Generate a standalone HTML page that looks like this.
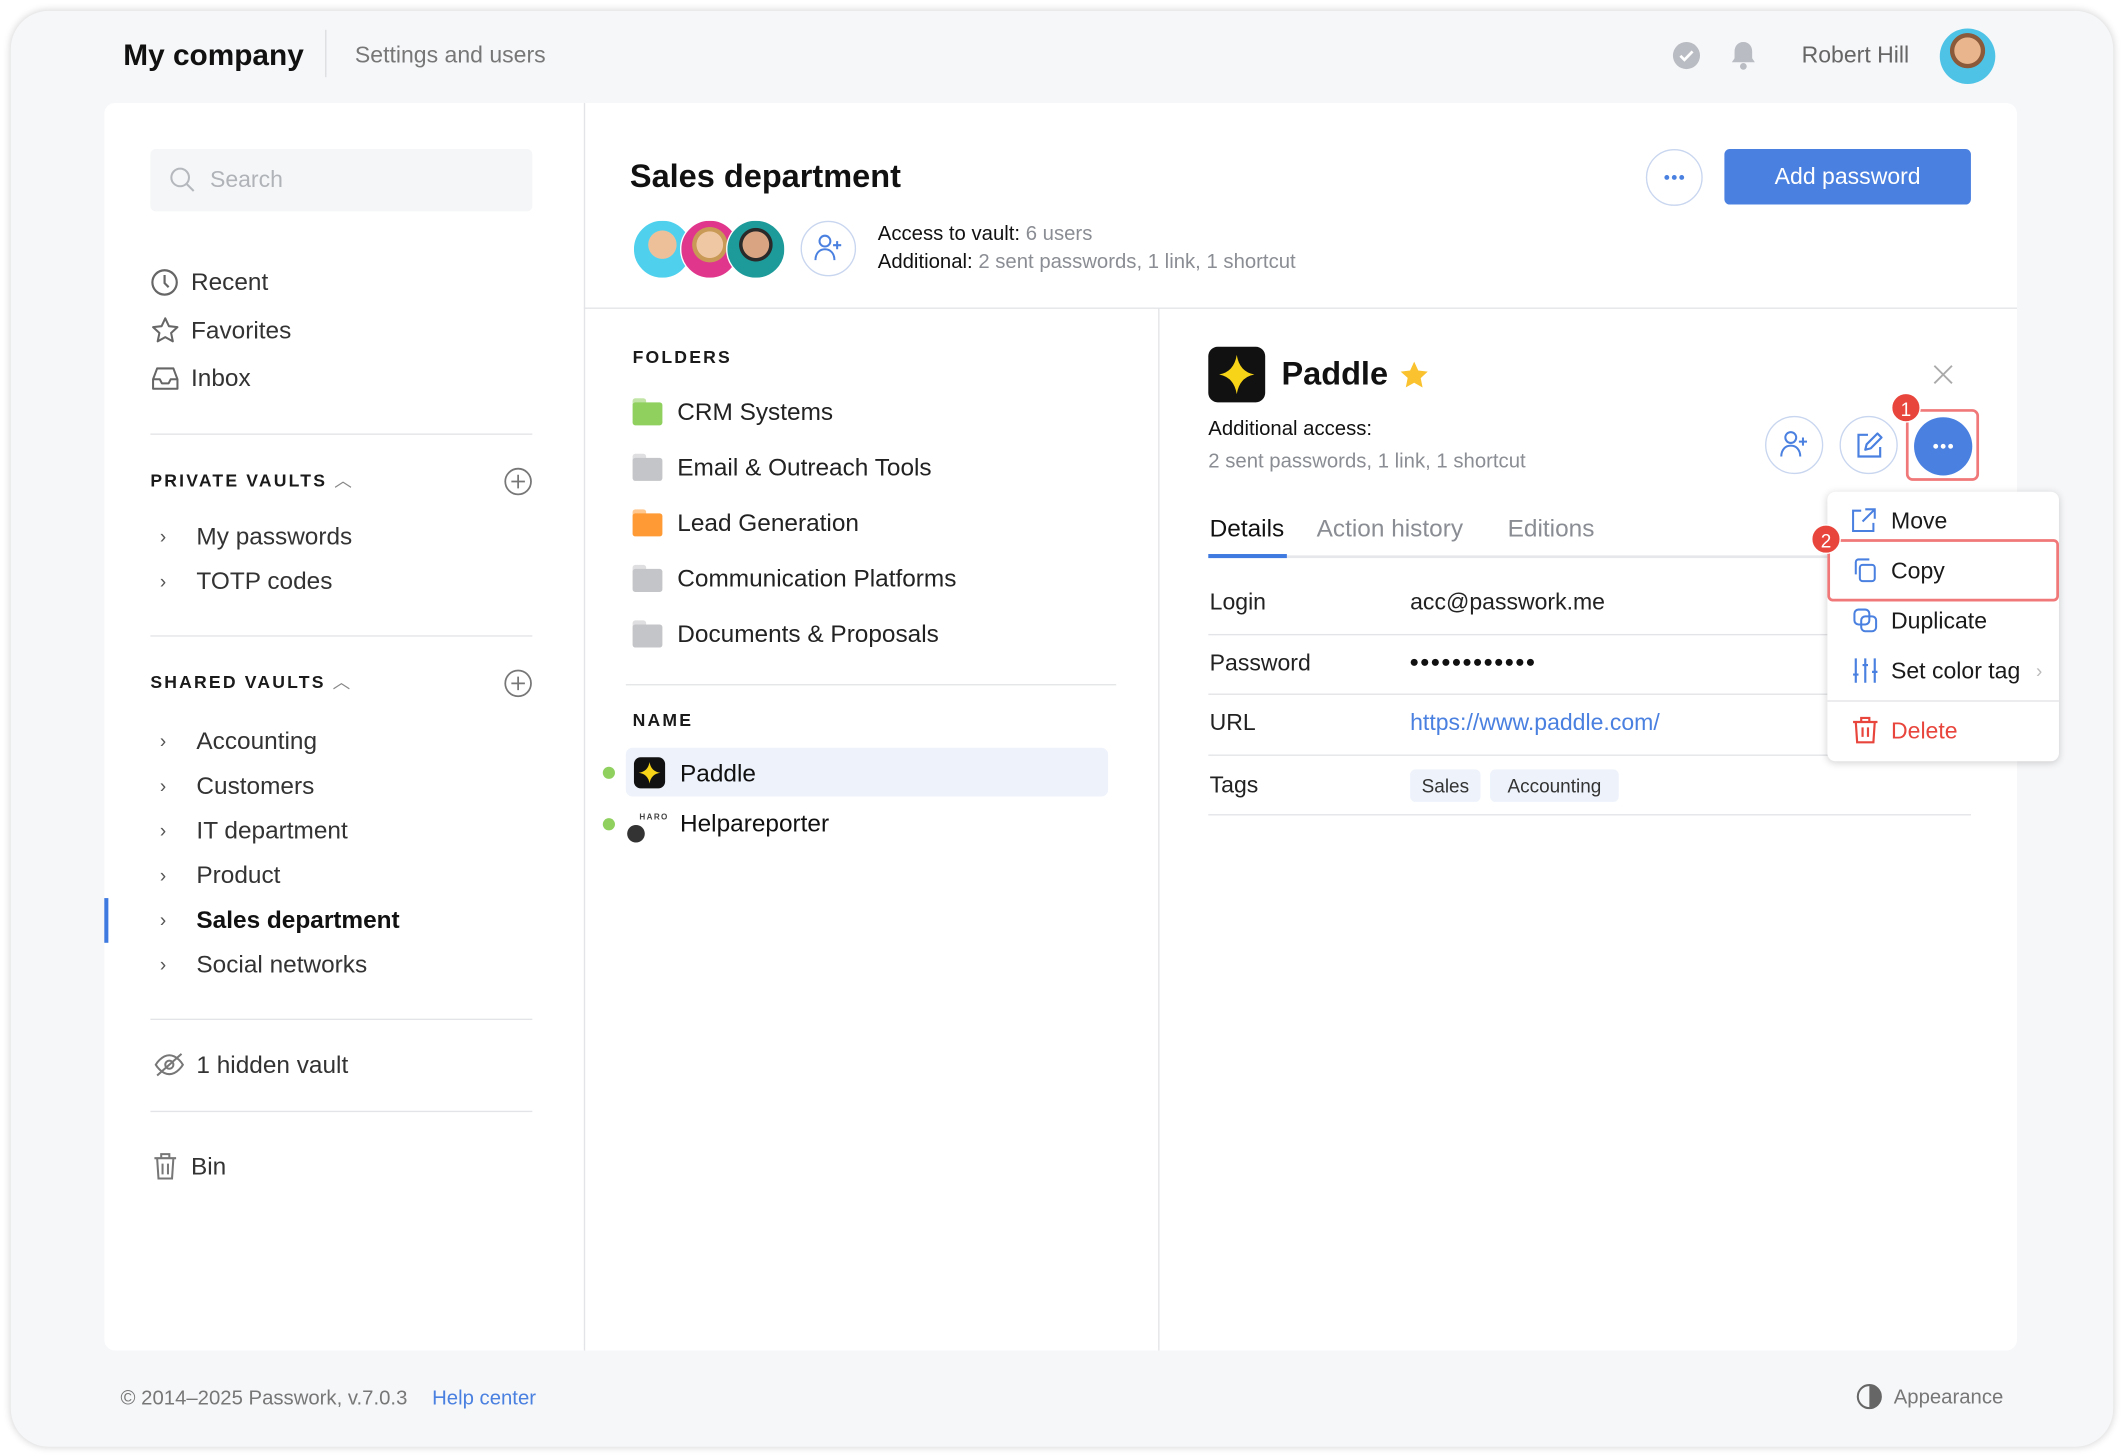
<!DOCTYPE html>
<html><head><meta charset="utf-8">
<style>
html,body{margin:0;padding:0;background:#fff;width:2124px;height:1456px;overflow:hidden}
#s{position:absolute;left:0;top:0;width:1568px;height:1075px;transform:scale(1.35459);transform-origin:0 0;font-family:"Liberation Sans",sans-serif;color:#1a1a1a}
.a{position:absolute}
.t{position:absolute;line-height:24px;white-space:nowrap}
.win{left:8px;top:8px;width:1552px;height:1060px;background:#f6f7f9;border-radius:28px;box-shadow:0 0 6px rgba(0,0,0,.18)}
.card{left:77px;top:76px;width:1412px;height:921px;background:#fff;border-radius:8px}
.line{position:absolute;height:1px;background:#e3e4e7}
.vl{position:absolute;width:1px;background:#e3e4e7}
.side{font-size:18px;color:#333}
.cap{font-size:13px;font-weight:bold;letter-spacing:1.6px;color:#1a1a1a}
.chev{position:absolute;font-size:14px;color:#555;line-height:24px}
.grey{color:#8a8d93}
.circ{position:absolute;border-radius:50%;border:1.5px solid #c9d6ef;box-sizing:border-box;background:#fff}
.fold{position:absolute;width:22px;height:17px;border-radius:2px}
.fold:before{content:"";position:absolute;left:0;top:-3px;width:10px;height:5px;border-radius:2px 2px 0 0;background:inherit;opacity:.55}
.mi{font-size:17px;color:#1a1a1a}
.badge{position:absolute;width:22px;height:22px;border-radius:50%;background:#e8453c;color:#fff;font-size:14px;text-align:center;line-height:22px;border:1.5px solid #fff;box-sizing:border-box}
</style></head><body>
<div id="s">
<div class="a win"></div>
<div class="t" style="left:91px;top:29px;font-size:22px;font-weight:bold;color:#111">My company</div>
<div class="vl" style="left:240px;top:22px;height:35px;background:#dcdde0"></div>
<div class="t grey" style="left:262px;top:29px;font-size:17px;color:#777">Settings and users</div>
<svg class="a" style="left:1234px;top:30px" width="22" height="22" viewBox="0 0 22 22"><circle cx="11" cy="11" r="10" fill="#b9bcc2"/><path d="M6.5 11.2l3 3 6-6.2" stroke="#fff" stroke-width="2" fill="none"/></svg>
<svg class="a" style="left:1276px;top:29px" width="22" height="24" viewBox="0 0 22 24"><path d="M11 2c-4 0-6.5 3-6.5 7v5l-2 3h17l-2-3V9c0-4-2.5-7-6.5-7z" fill="#b9bcc2"/><circle cx="11" cy="20" r="2.5" fill="#b9bcc2"/></svg>
<div class="t" style="left:1330px;top:29px;font-size:17px;color:#666">Robert Hill</div>
<div class="a" style="left:1432px;top:21px;width:41px;height:41px;border-radius:50%;background:radial-gradient(circle at 50% 40%,#e9b58c 0 30%,#8a5a3a 31% 40%,#4fc3e6 41%)"></div>

<div class="a card"></div>
<!-- sidebar -->
<div class="a" style="left:111px;top:110px;width:282px;height:46px;background:#f5f6f8;border-radius:4px"></div>
<svg class="a" style="left:124px;top:122px" width="22" height="22" viewBox="0 0 22 22"><circle cx="9" cy="9" r="6.5" stroke="#b5b8bd" stroke-width="1.5" fill="none"/><path d="M14 14l5 5" stroke="#b5b8bd" stroke-width="1.5"/></svg>
<div class="t" style="left:155px;top:121px;font-size:17px;color:#b0b3b8">Search</div>

<svg class="a" style="left:111px;top:198px" width="21" height="21" viewBox="0 0 21 21"><circle cx="10.5" cy="10.5" r="9" stroke="#666" stroke-width="1.6" fill="none"/><path d="M10.5 5v6l3 3" stroke="#666" stroke-width="1.6" fill="none"/></svg>
<div class="t side" style="left:141px;top:196px">Recent</div>
<svg class="a" style="left:111px;top:233px" width="22" height="22" viewBox="0 0 22 22"><path d="M11 2l2.7 5.8 6.3.7-4.7 4.3 1.3 6.2L11 15.9 5.4 19l1.3-6.2L2 8.5l6.3-.7z" stroke="#666" stroke-width="1.5" fill="none" stroke-linejoin="round"/></svg>
<div class="t side" style="left:141px;top:232px">Favorites</div>
<svg class="a" style="left:111px;top:270px" width="22" height="20" viewBox="0 0 22 20"><path d="M2 10l3-8h12l3 8v7H2z M2 10h5l1.5 3h5l1.5-3h5" stroke="#666" stroke-width="1.5" fill="none" stroke-linejoin="round"/></svg>
<div class="t side" style="left:141px;top:267px">Inbox</div>
<div class="line" style="left:111px;top:320px;width:282px"></div>
<div class="t cap" style="left:111px;top:343px">PRIVATE VAULTS <span style="font-weight:normal;color:#888">︿</span></div>
<svg class="a" style="left:372px;top:345px" width="21" height="21" viewBox="0 0 21 21"><circle cx="10.5" cy="10.5" r="9.5" stroke="#777" stroke-width="1.3" fill="none"/><path d="M10.5 5.5v10M5.5 10.5h10" stroke="#777" stroke-width="1.3"/></svg>
<div class="chev" style="left:118px;top:384px">›</div><div class="t side" style="left:145px;top:384px">My passwords</div>
<div class="chev" style="left:118px;top:417px">›</div><div class="t side" style="left:145px;top:417px">TOTP codes</div>
<div class="line" style="left:111px;top:469px;width:282px"></div>
<div class="t cap" style="left:111px;top:492px">SHARED VAULTS <span style="font-weight:normal;color:#888">︿</span></div>
<svg class="a" style="left:372px;top:494px" width="21" height="21" viewBox="0 0 21 21"><circle cx="10.5" cy="10.5" r="9.5" stroke="#777" stroke-width="1.3" fill="none"/><path d="M10.5 5.5v10M5.5 10.5h10" stroke="#777" stroke-width="1.3"/></svg>
<div class="chev" style="left:118px;top:535px">›</div><div class="t side" style="left:145px;top:535px">Accounting</div>
<div class="chev" style="left:118px;top:568px">›</div><div class="t side" style="left:145px;top:568px">Customers</div>
<div class="chev" style="left:118px;top:601px">›</div><div class="t side" style="left:145px;top:601px">IT department</div>
<div class="chev" style="left:118px;top:634px">›</div><div class="t side" style="left:145px;top:634px">Product</div>
<div class="a" style="left:77px;top:663px;width:3px;height:33px;background:#3f7ae0"></div>
<div class="chev" style="left:118px;top:667px">›</div><div class="t side" style="left:145px;top:667px;font-weight:bold;color:#111">Sales department</div>
<div class="chev" style="left:118px;top:700px">›</div><div class="t side" style="left:145px;top:700px">Social networks</div>
<div class="line" style="left:111px;top:752px;width:282px"></div>
<svg class="a" style="left:113px;top:776px" width="24" height="20" viewBox="0 0 24 20"><path d="M2 10s4-7 10-7 10 7 10 7-4 7-10 7S2 10 2 10z" stroke="#777" stroke-width="1.5" fill="none"/><circle cx="12" cy="10" r="3" stroke="#777" stroke-width="1.5" fill="none"/><path d="M3 18L21 2" stroke="#777" stroke-width="1.5"/></svg>
<div class="t side" style="left:145px;top:774px">1 hidden vault</div>
<div class="line" style="left:111px;top:820px;width:282px"></div>
<svg class="a" style="left:112px;top:850px" width="20" height="22" viewBox="0 0 20 22"><path d="M2 5h16M7 5V2h6v3M4 5l1 15h10l1-15M8 9v8M12 9v8" stroke="#777" stroke-width="1.5" fill="none"/></svg>
<div class="t side" style="left:141px;top:849px">Bin</div>

<div class="vl" style="left:431px;top:76px;height:921px"></div>
<!-- vault header -->
<div class="t" style="left:465px;top:119px;font-size:24px;font-weight:bold;color:#111">Sales department</div>
<div class="a" style="left:467px;top:162px;width:42px;height:42px;border-radius:50%;background:radial-gradient(circle at 50% 42%,#eec09a 0 32%,#4fd1ee 33%);border:1px solid #fff"></div>
<div class="a" style="left:502px;top:162px;width:42px;height:42px;border-radius:50%;background:radial-gradient(circle at 50% 42%,#f0c7a3 0 30%,#c99a55 31% 40%,#e0368c 41%);border:1px solid #fff"></div>
<div class="a" style="left:536px;top:162px;width:42px;height:42px;border-radius:50%;background:radial-gradient(circle at 50% 42%,#d9a482 0 30%,#2a2a2a 31% 38%,#1d9a9a 39%);border:1px solid #fff"></div>
<div class="circ" style="left:591px;top:163px;width:41px;height:41px"></div>
<svg class="a" style="left:600px;top:172px" width="24" height="22" viewBox="0 0 24 22"><circle cx="9" cy="6" r="4" stroke="#4a80e0" stroke-width="1.5" fill="none"/><path d="M2 20c0-5 3-8 7-8s7 3 7 8M18 6v6M15 9h6" stroke="#4a80e0" stroke-width="1.5" fill="none"/></svg>
<div class="t" style="left:648px;top:161px;font-size:15px"><span style="color:#111">Access to vault:</span> <span class="grey">6 users</span></div>
<div class="t" style="left:648px;top:182px;font-size:15px"><span style="color:#111">Additional:</span> <span class="grey">2 sent passwords, 1 link, 1 shortcut</span></div>
<div class="circ" style="left:1215px;top:110px;width:42px;height:42px"></div>
<svg class="a" style="left:1215px;top:110px" width="42" height="42" viewBox="0 0 42 42"><circle cx="15.5" cy="21" r="1.8" fill="#4a80e0"/><circle cx="21" cy="21" r="1.8" fill="#4a80e0"/><circle cx="26.5" cy="21" r="1.8" fill="#4a80e0"/></svg>
<div class="a" style="left:1273px;top:110px;width:182px;height:41px;background:#4a80e0;border-radius:4px;color:#fff;font-size:17px;text-align:center;line-height:41px">Add password</div>
<div class="line" style="left:431px;top:227px;width:1058px"></div>
<!-- folders -->
<div class="t cap" style="left:467px;top:252px">FOLDERS</div>
<div class="fold" style="left:467px;top:297px;background:#8fd05f"></div><div class="t side" style="left:500px;top:292px;color:#222">CRM Systems</div>
<div class="fold" style="left:467px;top:338px;background:#c4c5c8"></div><div class="t side" style="left:500px;top:333px;color:#222">Email &amp; Outreach Tools</div>
<div class="fold" style="left:467px;top:379px;background:#ff9a35"></div><div class="t side" style="left:500px;top:374px;color:#222">Lead Generation</div>
<div class="fold" style="left:467px;top:420px;background:#c4c5c8"></div><div class="t side" style="left:500px;top:415px;color:#222">Communication Platforms</div>
<div class="fold" style="left:467px;top:461px;background:#c4c5c8"></div><div class="t side" style="left:500px;top:456px;color:#222">Documents &amp; Proposals</div>
<div class="line" style="left:462px;top:505px;width:362px"></div>
<div class="t cap" style="left:467px;top:520px">NAME</div>
<div class="a" style="left:462px;top:552px;width:356px;height:36px;background:#edf2fb;border-radius:5px"></div>
<div class="a" style="left:445px;top:566px;width:9px;height:9px;border-radius:50%;background:#8fd05f"></div>
<div class="a" style="left:468px;top:559px;width:23px;height:23px;background:#111;border-radius:5px"></div>
<svg class="a" style="left:468px;top:559px" width="23" height="23" viewBox="0 0 23 23"><path d="M11.5 3.5Q12.5 10.5 19.5 11.5Q12.5 12.5 11.5 19.5Q10.5 12.5 3.5 11.5Q10.5 10.5 11.5 3.5z" fill="#f7d417"/></svg>
<div class="t side" style="left:502px;top:559px;color:#111">Paddle</div>
<div class="a" style="left:445px;top:604px;width:9px;height:9px;border-radius:50%;background:#8fd05f"></div>
<div class="t" style="left:472px;top:592px;font-size:6px;font-weight:bold;color:#444;letter-spacing:1px">HARO</div>
<div class="a" style="left:463px;top:609px;width:13px;height:13px;border-radius:50%;background:#333"></div>
<div class="t side" style="left:502px;top:596px;color:#111">Helpareporter</div>
<div class="vl" style="left:855px;top:227px;height:770px"></div>
<!-- detail -->
<div class="a" style="left:892px;top:256px;width:42px;height:41px;background:#111;border-radius:7px"></div>
<svg class="a" style="left:892px;top:256px" width="42" height="41" viewBox="0 0 42 41"><path d="M21 6Q23 18.5 34 20.5Q23 22.5 21 35Q19 22.5 8 20.5Q19 18.5 21 6z" fill="#f7d417"/></svg>
<div class="t" style="left:946px;top:265px;font-size:24px;font-weight:bold;color:#111">Paddle</div>
<svg class="a" style="left:1033px;top:266px" width="22" height="22" viewBox="0 0 22 22"><path d="M11 1l3 6.5 7 .8-5.2 4.8 1.4 7L11 16.6 4.8 20l1.4-7L1 8.3l7-.8z" fill="#f9c22e"/></svg>
<svg class="a" style="left:1427px;top:269px" width="15" height="15" viewBox="0 0 15 15"><path d="M1 1l13 13M14 1L1 14" stroke="#aaa" stroke-width="1.4"/></svg>
<div class="t" style="left:892px;top:305px;font-size:15px;color:#111">Additional access:</div>
<div class="t grey" style="left:892px;top:329px;font-size:15px">2 sent passwords, 1 link, 1 shortcut</div>
<div class="circ" style="left:1303px;top:307px;width:43px;height:43px"></div>
<svg class="a" style="left:1313px;top:317px" width="24" height="22" viewBox="0 0 24 22"><circle cx="9" cy="6" r="4" stroke="#4a80e0" stroke-width="1.5" fill="none"/><path d="M2 20c0-5 3-8 7-8s7 3 7 8M18 6v6M15 9h6" stroke="#4a80e0" stroke-width="1.5" fill="none"/></svg>
<div class="circ" style="left:1358px;top:307px;width:43px;height:43px"></div>
<svg class="a" style="left:1369px;top:318px" width="22" height="22" viewBox="0 0 22 22"><path d="M10 3H3v16h16v-7" stroke="#4a80e0" stroke-width="1.6" fill="none"/><path d="M8 14l1-4 8-8 3 3-8 8z" stroke="#4a80e0" stroke-width="1.6" fill="none" stroke-linejoin="round"/></svg>
<div class="a" style="left:1407px;top:302px;width:54px;height:53px;border:2px solid #f07878;border-radius:5px;box-sizing:border-box"></div>
<div class="a" style="left:1413px;top:308px;width:43px;height:43px;border-radius:50%;background:#4a80e0"></div>
<svg class="a" style="left:1413px;top:308px" width="43" height="43" viewBox="0 0 43 43"><circle cx="16" cy="21.5" r="1.8" fill="#fff"/><circle cx="21.5" cy="21.5" r="1.8" fill="#fff"/><circle cx="27" cy="21.5" r="1.8" fill="#fff"/></svg>
<div class="badge" style="left:1396px;top:290px">1</div>
<div class="t" style="left:893px;top:378px;font-size:18px;color:#111">Details</div>
<div class="t" style="left:972px;top:378px;font-size:18px;color:#8a8d93">Action history</div>
<div class="t" style="left:1113px;top:378px;font-size:18px;color:#8a8d93">Editions</div>
<div class="line" style="left:892px;top:410px;width:460px;height:2px;background:#e6e7ea"></div>
<div class="a" style="left:892px;top:409px;width:58px;height:3px;background:#3f7ae0"></div>
<div class="t" style="left:893px;top:433px;font-size:17px;color:#222">Login</div>
<div class="t" style="left:1041px;top:433px;font-size:17px;color:#222">acc@passwork.me</div>
<div class="line" style="left:892px;top:468px;width:563px"></div>
<div class="t" style="left:893px;top:478px;font-size:17px;color:#222">Password</div>
<svg class="a" style="left:1041px;top:484px" width="96" height="10" viewBox="0 0 96 10"><g fill="#111"><circle cx="3" cy="5" r="2.6"/><circle cx="10.8" cy="5" r="2.6"/><circle cx="18.6" cy="5" r="2.6"/><circle cx="26.4" cy="5" r="2.6"/><circle cx="34.2" cy="5" r="2.6"/><circle cx="42" cy="5" r="2.6"/><circle cx="49.8" cy="5" r="2.6"/><circle cx="57.6" cy="5" r="2.6"/><circle cx="65.4" cy="5" r="2.6"/><circle cx="73.2" cy="5" r="2.6"/><circle cx="81" cy="5" r="2.6"/><circle cx="88.8" cy="5" r="2.6"/></g></svg>
<div class="line" style="left:892px;top:512px;width:563px"></div>
<div class="t" style="left:893px;top:522px;font-size:17px;color:#222">URL</div>
<div class="t" style="left:1041px;top:522px;font-size:17px;color:#4a80e0">https://www.paddle.com/</div>
<div class="line" style="left:892px;top:557px;width:563px"></div>
<div class="t" style="left:893px;top:568px;font-size:17px;color:#222">Tags</div>
<div class="a" style="left:1041px;top:568px;width:52px;height:24px;background:#eef3fb;border-radius:4px;font-size:14px;line-height:24px;text-align:center;color:#333">Sales</div>
<div class="a" style="left:1100px;top:568px;width:95px;height:24px;background:#eef3fb;border-radius:4px;font-size:14px;line-height:24px;text-align:center;color:#333">Accounting</div>
<div class="line" style="left:892px;top:601px;width:563px"></div>
<!-- dropdown -->
<div class="a" style="left:1349px;top:363px;width:171px;height:199px;background:#fff;border-radius:6px;box-shadow:0 1px 6px rgba(0,0,0,.18)"></div>
<svg class="a" style="left:1366px;top:374px" width="20" height="20" viewBox="0 0 20 20"><path d="M8 3H2v15h15v-6M11 2h7v7M18 2l-9 9" stroke="#4a80e0" stroke-width="1.5" fill="none"/></svg>
<div class="t mi" style="left:1396px;top:373px">Move</div>
<div class="a" style="left:1349px;top:398px;width:171px;height:46px;border:2px solid #f07878;border-radius:4px;box-sizing:border-box"></div>
<div class="badge" style="left:1337px;top:387px">2</div>
<svg class="a" style="left:1367px;top:411px" width="20" height="20" viewBox="0 0 20 20"><rect x="6" y="6" width="11" height="12" rx="2" stroke="#4a80e0" stroke-width="1.5" fill="none"/><path d="M3 13V4a2 2 0 012-2h8" stroke="#4a80e0" stroke-width="1.5" fill="none"/></svg>
<div class="t mi" style="left:1396px;top:410px">Copy</div>
<svg class="a" style="left:1367px;top:448px" width="20" height="20" viewBox="0 0 20 20"><rect x="2" y="2" width="11" height="11" rx="3" stroke="#4a80e0" stroke-width="1.5" fill="none"/><rect x="7" y="7" width="11" height="11" rx="3" stroke="#4a80e0" stroke-width="1.5" fill="none"/></svg>
<div class="t mi" style="left:1396px;top:447px">Duplicate</div>
<svg class="a" style="left:1367px;top:485px" width="20" height="20" viewBox="0 0 20 20"><path d="M3 1v18M10 1v18M17 1v18M1 13h4M8 6h4M15 11h4" stroke="#4a80e0" stroke-width="1.6"/></svg>
<div class="t mi" style="left:1396px;top:484px">Set color tag</div>
<div class="t" style="left:1503px;top:483px;font-size:14px;color:#bbb">›</div>
<div class="line" style="left:1349px;top:517px;width:171px"></div>
<svg class="a" style="left:1367px;top:528px" width="20" height="22" viewBox="0 0 20 22"><path d="M1 5h18M7 5V2h6v3M3 5l1 15h12l1-15M8 9v7M12 9v7" stroke="#e8453c" stroke-width="1.6" fill="none"/></svg>
<div class="t mi" style="left:1396px;top:528px;color:#e8453c">Delete</div>
<!-- footer -->
<div class="t" style="left:89px;top:1021px;font-size:15px;color:#777">© 2014–2025 Passwork, v.7.0.3</div>
<div class="t" style="left:319px;top:1021px;font-size:15px;color:#4a80e0">Help center</div>
<svg class="a" style="left:1370px;top:1021px" width="20" height="20" viewBox="0 0 20 20"><circle cx="10" cy="10" r="8.5" stroke="#666" stroke-width="1.5" fill="none"/><path d="M10 1.5a8.5 8.5 0 010 17z" fill="#666"/></svg>
<div class="t" style="left:1398px;top:1020px;font-size:15px;color:#777">Appearance</div>
</div>
</body></html>
